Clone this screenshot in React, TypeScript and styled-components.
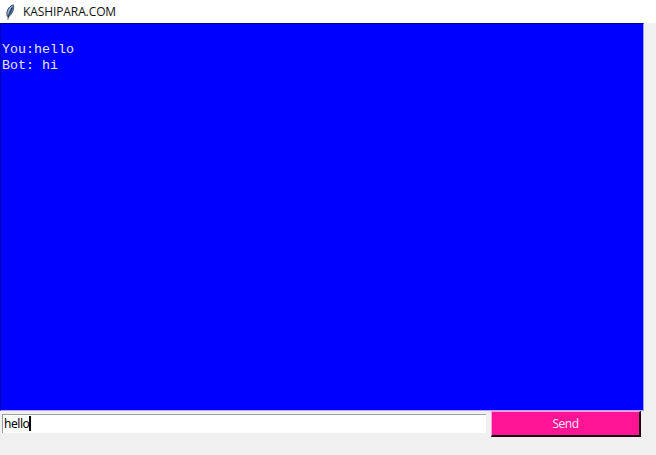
import React from "react";
import styled, { createGlobalStyle } from "styled-components";

const GlobalStyle = createGlobalStyle`
  * { box-sizing: border-box; }
  body { margin: 0; background: #f0f0f0; overflow: hidden; }
`;

const Window = styled.div`
  display: flex;
  flex-direction: column;
  width: 656px;
  height: 455px;
  background: #f0f0f0;
  font-family: "Noto Sans", "Open Sans", sans-serif;
`;

const TitleBar = styled.header`
  display: flex;
  align-items: center;
  flex: none;
  height: 23px;
  padding-left: 4px;
  background: #fff;
`;

const Feather = styled.svg`
  flex: none;
  width: 14px;
  height: 18px;
  margin-right: 5px;
`;

const Label = styled.span<{ $width: number }>`
  display: block;
  flex: none;
  width: ${(p) => p.$width}px;
  line-height: 18px;
  white-space: nowrap;
`;

const Title = styled(Label)`
  font-family: "Open Sans", sans-serif;
  font-size: 12px;
  letter-spacing: -0.1px;
  color: #111;
`;

const ChatLog = styled.pre`
  flex: none;
  width: 644px;
  height: 388px;
  margin: 0;
  padding: 18px 1px 0;
  background: #0000ff;
  border: 1px solid #0000b4;
  border-top-color: #000096;
  border-right-color: #9a9aff;
  border-bottom-color: #b8a0ff;
  color: #e6e6ff;
  font-family: "Liberation Mono", monospace;
  font-size: 13.34px;
  line-height: 16px;
`;

const Composer = styled.form`
  display: flex;
  align-items: flex-start;
`;

const Entry = styled.div`
  display: flex;
  align-items: flex-start;
  width: 484px;
  height: 19px;
  margin: 3px 5px 0 2px;
  padding-left: 1px;
  background: #fff;
  border-top: 1px solid #a0a0a0;
  border-left: 1px solid #a0a0a0;
  color: #000;
  font-size: 12px;
`;

const EntryText = styled(Label)`
  letter-spacing: -0.45px;
`;

const Caret = styled.span`
  width: 2px;
  height: 15px;
  margin: 1px 0 0 -1px;
  background: #000;
`;

const SendButton = styled.button`
  width: 150px;
  height: 26px;
  padding: 1px 0 0;
  background: #ff1493;
  border: solid;
  border-width: 1px 2px 2px 1px;
  border-color: #ffa0dc #18000c #18000c #ffa0dc;
  color: #ffe6f5;
  font-family: "Open Sans", sans-serif;
  font-size: 12px;
  letter-spacing: -0.5px;
  line-height: 18px;
`;

export default function App() {
  return (
    <Window>
      <GlobalStyle />
      <TitleBar>
        <Feather viewBox="0 0 14 18" aria-hidden="true">
          <path d="M3.2 13.2C2 8.5 4 3.8 9.3 1.8c1.1 3.6-.7 8.8-4.6 11.9z" fill="#8aabd6" stroke="#1c2636" strokeWidth=".8" />
          <path d="M9.3 1.8c1.1 3.6-.7 8.8-4.6 11.9l1.5-4.6z" fill="#4a6590" />
          <path d="M7.8 4.8 4.5 12.5 3.9 16.5" fill="none" stroke="#17202c" strokeWidth=".9" />
        </Feather>
        <Title $width={96}>KASHIPARA.COM</Title>
      </TitleBar>
      <ChatLog>{"You:hello\nBot: hi"}</ChatLog>
      <Composer>
        <Entry>
          <EntryText $width={26}>hello</EntryText>
          <Caret />
        </Entry>
        <SendButton type="button">Send</SendButton>
      </Composer>
    </Window>
  );
}
